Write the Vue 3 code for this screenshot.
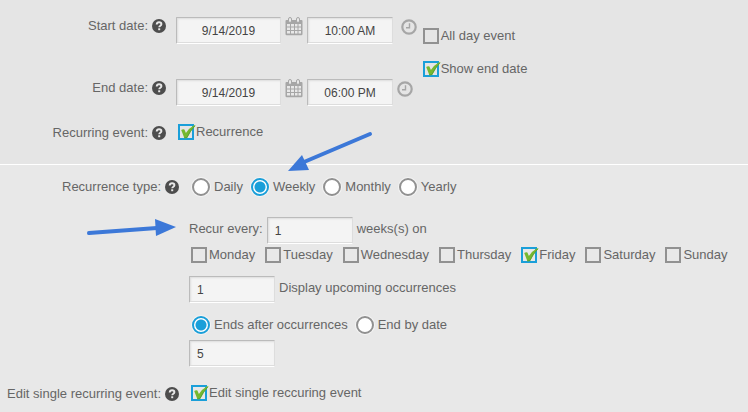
<template>
	<form class="event-form" @submit.prevent>
		<svg class="symbols" aria-hidden="true">
			<symbol id="help" viewBox="0 0 14 14">
				<circle cx="7" cy="7" r="7" fill="#4d4d4d" />
				<path d="M4.7 5.5C4.8 4 5.8 3.3 7.1 3.3s2.3.7 2.3 1.900c0 1.500-2.200 1.500-2.200 3.100" fill="none" stroke="#e8e8e8" stroke-width="1.900" />
				<rect x="6.200" y="9.300" width="2" height="1.900" fill="#e8e8e8" />
			</symbol>
			<symbol id="calendar" viewBox="0 0 18 19">
				<path d="M1.500 3h15q1 0 1 1v13q0 1.200-1.200 1.200H1.700Q.5 18.200.5 17V4q0-1 1-1z" fill="#a6a6a6" />
				<path d="M2 7h3v2.500H2zM6 7h3v2.500H6zM10 7h2.500v2.500H10zM13.500 7H16v2.500h-2.500zM2 10.500h3V13H2zM6 10.500h3V13H6zM10 10.500h2.500V13H10zM13.500 10.500H16V13h-2.500zM2 14h3v2.500H2zM6 14h3v2.500H6zM10 14h2.500v2.500H10zM13.500 14H16v2.500h-2.500z" fill="#e8e8e8" />
				<rect x="3.500" y=".5" width="3" height="5" rx="1.500" fill="#e8e8e8" stroke="#a6a6a6" />
				<rect x="11.500" y=".5" width="3" height="5" rx="1.500" fill="#e8e8e8" stroke="#a6a6a6" />
			</symbol>
			<symbol id="clock" viewBox="0 0 16 16">
				<circle cx="8" cy="8" r="6.700" fill="none" stroke="#a6a6a6" stroke-width="2.200" />
				<path d="M8.500 4.200v4.500H5" fill="none" stroke="#a6a6a6" stroke-width="1.400" />
			</symbol>
			<symbol id="tick" viewBox="0 0 18 16">
				<path d="M3.200 6Q4.800 4.800 6.400 5.400L7.900 9.100Q11 4 16 1.200L17.600 1.500Q12.200 7.200 9.200 14L6.500 14.500Q5 10.500 3.200 6z" fill="#76b82f" />
				<path d="M6.200 13.800L8.900 13.500Q12 7 16.800 1.900" fill="none" stroke="#4f9a3a" stroke-width=".7" />
			</symbol>
		</svg>

		<section class="panel schedule">
			<div class="fields">
				<div class="row">
					<div class="caption">
						<label for="start-date">Start date:</label>
						<svg class="help"><use href="#help" /></svg>
					</div>
					<div class="when">
						<input id="start-date" v-model="form.startDate" class="text date" type="text" />
						<svg class="calendar"><use href="#calendar" /></svg>
						<input v-model="form.startTime" class="text time" type="text" aria-label="Start time" />&nbsp;<svg class="clock"><use href="#clock" /></svg>
					</div>
				</div>
				<div class="row end">
					<div class="caption">
						<label for="end-date">End date:</label>
						<svg class="help"><use href="#help" /></svg>
					</div>
					<div class="when">
						<input id="end-date" v-model="form.endDate" class="text date" type="text" />
						<svg class="calendar"><use href="#calendar" /></svg>
						<input v-model="form.endTime" class="text time" type="text" aria-label="End time" />
						<svg class="clock"><use href="#clock" /></svg>
					</div>
				</div>
				<div class="row last">
					<div class="caption">
						<span>Recurring event:</span>
						<svg class="help"><use href="#help" /></svg>
					</div>
					<div class="checks">
						<label class="check">
							<input v-model="form.recurrence" type="checkbox" />
							<svg v-if="form.recurrence" class="tick"><use href="#tick" /></svg>
							Recurrence
						</label>
					</div>
				</div>
			</div>
			<div class="options">
				<label class="check">
					<input v-model="form.allDay" type="checkbox" />
					<svg v-if="form.allDay" class="tick"><use href="#tick" /></svg>
					All day event
				</label>
				<label class="check">
					<input v-model="form.showEnd" type="checkbox" />
					<svg v-if="form.showEnd" class="tick"><use href="#tick" /></svg>
					Show end date
				</label>
			</div>
		</section>

		<section class="panel recurrence">
			<div class="row">
				<div class="caption">
					<span>Recurrence type:</span>
					<svg class="help"><use href="#help" /></svg>
				</div>
				<div class="settings">
					<div class="radios">
						<label v-for="type in types" :key="type" class="radio">
							<input v-model="form.type" type="radio" name="type" :value="type" />
							{{ type }}
						</label>
					</div>
					<div class="line every">
						<label for="every">Recur every:</label>
						<input id="every" v-model="form.every" class="text number" type="text" />
						<span>weeks(s) on</span>
					</div>
					<div class="checks days">
						<label v-for="day in days" :key="day" class="check">
							<input v-model="form.days" type="checkbox" :value="day" />
							<svg v-if="form.days.includes(day)" class="tick"><use href="#tick" /></svg>
							{{ day }}
						</label>
					</div>
					<div class="line upcoming">
						<input id="upcoming" v-model="form.upcoming" class="text number" type="text" />
						<label for="upcoming">Display upcoming occurrences</label>
					</div>
					<div class="radios ends">
						<label v-for="end in ends" :key="end" class="radio">
							<input v-model="form.ends" type="radio" name="ends" :value="end" />
							{{ end }}
						</label>
					</div>
					<input v-model="form.count" class="text number" type="text" aria-label="Number of occurrences" />
				</div>
			</div>
			<div class="row last">
				<div class="caption">
					<span>Edit single recurring event:</span>
					<svg class="help"><use href="#help" /></svg>
				</div>
				<div class="checks">
					<label class="check">
						<input v-model="form.editSingle" type="checkbox" />
						<svg v-if="form.editSingle" class="tick"><use href="#tick" /></svg>
						Edit single reccuring event
					</label>
				</div>
			</div>
		</section>

		<!-- arrows pointing at the recurrence settings -->
		<svg class="arrows" width="400" height="250" aria-hidden="true">
			<g fill="#3c78d8" stroke="#3c78d8">
				<path d="M370 134L304 162" stroke-width="4" stroke-linecap="round" />
				<path d="M288 171L302 155L309 170z" stroke="none" />
				<path d="M89 233L157 228" stroke-width="4" stroke-linecap="round" />
				<path d="M176 227L155 219L156 236z" stroke="none" />
			</g>
		</svg>
	</form>
</template>

<script setup>
import { reactive } from "vue";

const types = ["Daily", "Weekly", "Monthly", "Yearly"];
const days = ["Monday", "Tuesday", "Wednesday", "Thursday", "Friday", "Saturday", "Sunday"];
const ends = ["Ends after occurrences", "End by date"];

const form = reactive({
	startDate: "9/14/2019",
	startTime: "10:00 AM",
	endDate: "9/14/2019",
	endTime: "06:00 PM",
	allDay: false,
	showEnd: true,
	recurrence: true,
	type: "Weekly",
	every: "1",
	days: ["Friday"],
	upcoming: "1",
	ends: "Ends after occurrences",
	count: "5",
	editSingle: true,
});
</script>

<style>
body {
	margin: 0;
	background: #e8e8e8;
}
</style>

<style scoped>
.event-form {
	position: relative;
	font: 13px/18px "Liberation Sans", Arial, sans-serif;
	color: #666;
}

.symbols {
	display: none;
}

.schedule {
	display: flex;
	gap: 6px;
	padding: 17px 0 22px;
	background: #e5e5e5;
	border-bottom: 1px solid #fff;
}

.recurrence {
	padding: 13px 0 11px;
}

.row {
	display: grid;
	grid-template-columns: 166px 1fr;
	column-gap: 10px;
}

.recurrence .row {
	grid-template-columns: 179px 1fr;
}

.row.end {
	margin-top: 35px;
}

.row.last {
	margin-top: 18px;
}

.caption {
	display: flex;
	justify-content: flex-end;
	align-items: center;
	align-self: start;
	gap: 4px;
	white-space: nowrap;
}

.help {
	width: 14px;
	height: 14px;
}

.when {
	height: 27px;
	white-space: nowrap;
}

.when > * {
	vertical-align: top;
}

.calendar {
	width: 18px;
	height: 19px;
	margin: 0 4px;
}

.clock {
	width: 16px;
	height: 16px;
	margin: 2px 0 0 4px;
}

.text {
	box-sizing: border-box;
	height: 27px;
	margin: 0;
	padding: 0 7px;
	border: 1px solid;
	border-color: #bbb #ddd #fff #bbb;
	border-radius: 1px;
	background: #f4f4f4;
	box-shadow: inset 1px 1px 2px #ddd, inset 0 -1px #ddd;
	font: 12px "Liberation Sans", Arial, sans-serif;
	color: #444;
}

.date {
	width: 105px;
	text-align: center;
}

.time {
	width: 86px;
	text-align: center;
}

.number {
	display: block;
	width: 86px;
}

.options {
	display: flex;
	flex-direction: column;
	gap: 17px;
	padding-top: 11px;
}

.checks {
	display: flex;
	flex-wrap: wrap;
	gap: 3px 10px;
	padding-left: 2px;
}

.check {
	position: relative;
	display: flex;
	gap: 2px;
	line-height: 16px;
	white-space: nowrap;
}

.check input {
	appearance: none;
	box-sizing: border-box;
	width: 16px;
	height: 16px;
	margin: 0;
	border: 2px solid #919191;
}

.check input:checked {
	border-color: #1a9fd9;
}

.tick {
	position: absolute;
	top: 0;
	left: 0;
	width: 18px;
	height: 16px;
	pointer-events: none;
}

.radios {
	display: flex;
	flex-wrap: wrap;
	gap: 8px;
	padding-left: 3px;
}

.radio {
	display: flex;
	gap: 4px;
	white-space: nowrap;
}

.radio input {
	appearance: none;
	box-sizing: border-box;
	width: 18px;
	height: 18px;
	margin: 0;
	border: 2px solid #919191;
	border-radius: 50%;
	background: #fff;
	box-shadow: 0 0 0 1px #f4f4f4;
}

.radio input:checked {
	border-color: #1a9fd9;
	background: radial-gradient(circle, #1a9fd9 5px, #fff 6px);
}

.line {
	display: flex;
	gap: 4px;
	line-height: 24px;
}

.every {
	margin-top: 21px;
}

.days {
	margin-top: 3px;
}

.upcoming {
	margin: 13px 0;
}

.ends {
	margin-bottom: 6px;
}

.arrows {
	position: absolute;
	top: 0;
	left: 0;
	pointer-events: none;
}
</style>
